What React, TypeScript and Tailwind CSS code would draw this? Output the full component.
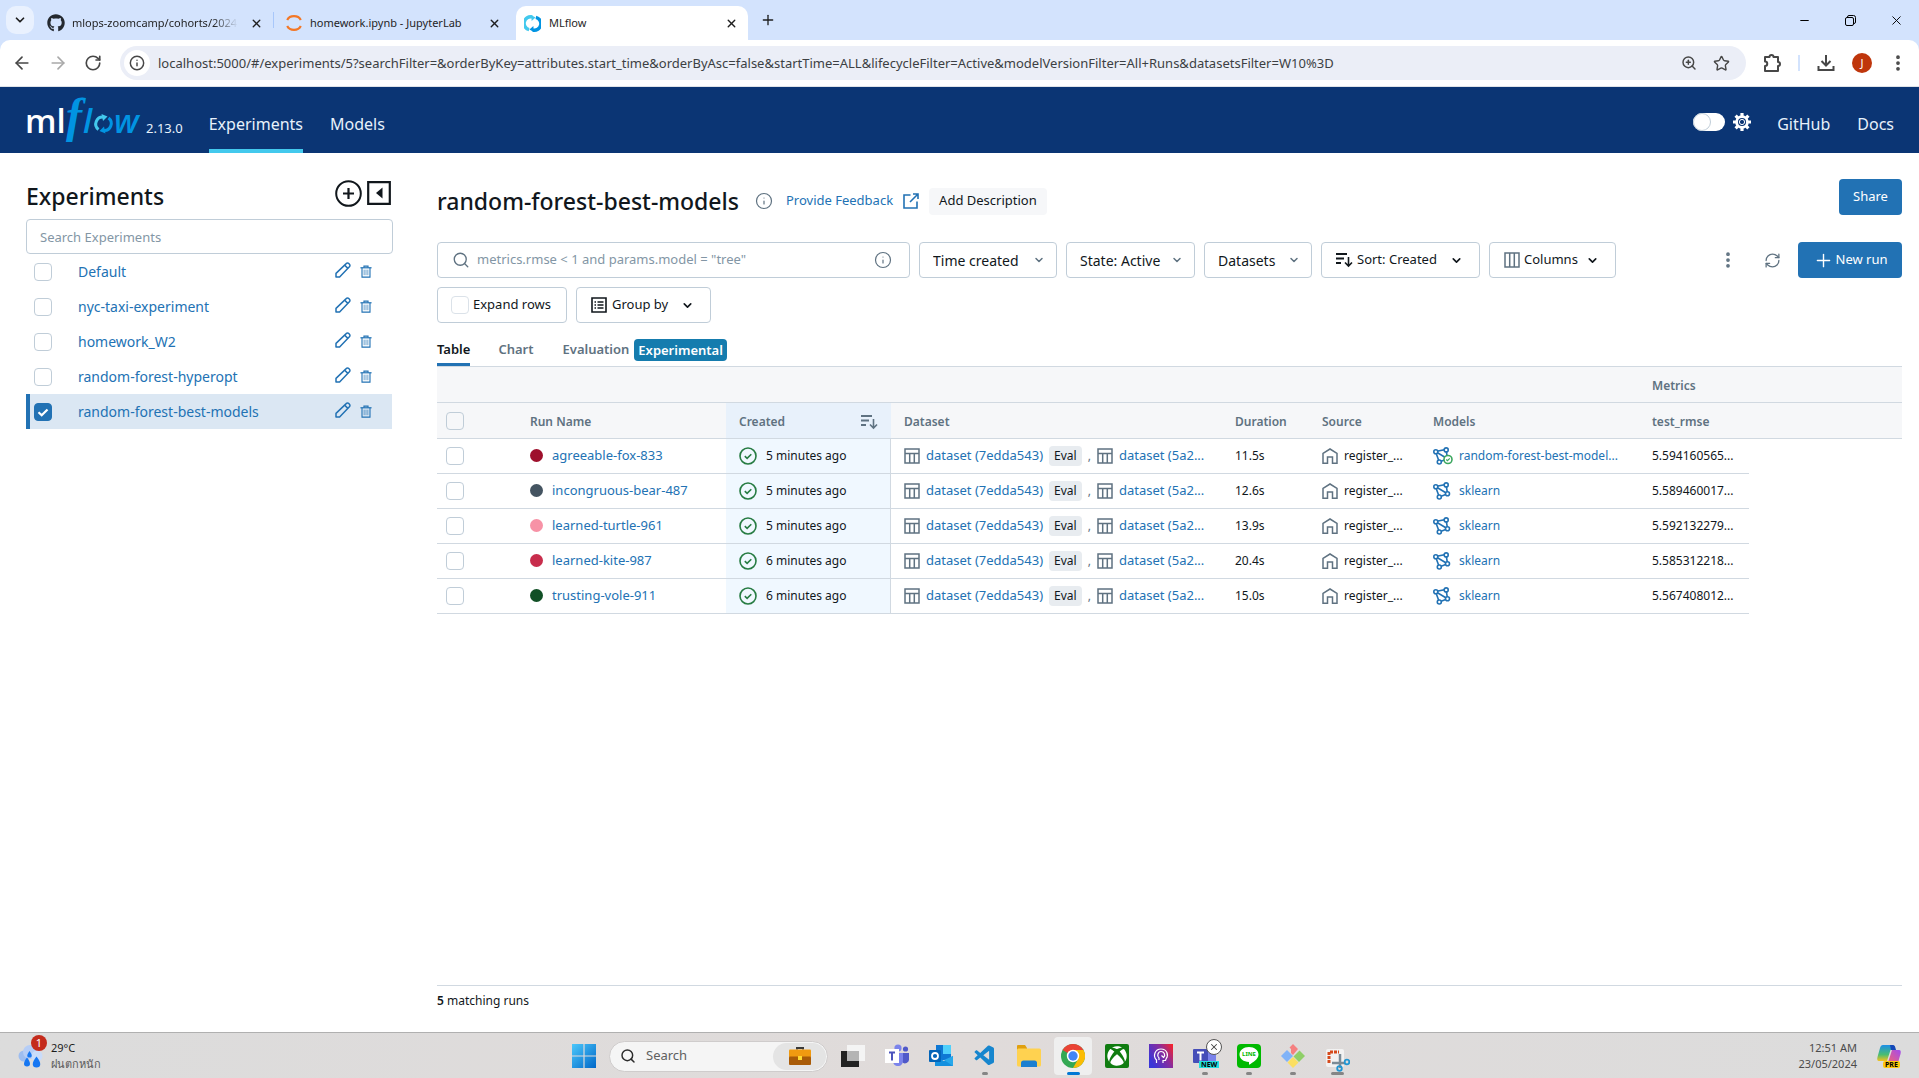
import React from "react";
import {
  ArrowLeft,
  ArrowRight,
  RotateCw,
  ChevronDown,
  Plus,
  X,
  Minus,
  Star,
  Info,
  Search,
  RefreshCw,
  EllipsisVertical,
  ZoomIn,
} from "lucide-react";
import { FaGithub, FaXbox } from "react-icons/fa";
import { VscVscode } from "react-icons/vsc";

const link = "text-[#2272b4]";

/* ---------- icons ---------- */

function MlflowMark({ size }: { size: number }) {
  return (
    <svg width={size} height={size} viewBox="0 0 20 20" fill="none" aria-hidden="true">
      <path d="M6 17.2A7.6 7.6 0 0 1 9.6 2.3" stroke="#43c9ed" strokeWidth="4" />
      <path d="M8.4 0l5.2 3-4.6 4z" fill="#43c9ed" />
      <path d="M14 2.8a7.6 7.6 0 0 1-3.6 14.9" stroke="#0194e2" strokeWidth="4" />
      <path d="M11.6 20l-5.2-3 4.6-4z" fill="#0194e2" />
    </svg>
  );
}

function JupyterIcon() {
  return (
    <svg width="18" height="18" viewBox="0 0 18 18" fill="none" stroke="#f37726" strokeWidth="2.2" aria-hidden="true">
      <path d="M2.2 6C3.5 3.4 6 2.2 9 2.2S14.5 3.4 15.8 6" />
      <path d="M2.2 12c1.3 2.6 3.8 3.8 6.8 3.8s5.5-1.2 6.8-3.8" />
    </svg>
  );
}

function PuzzleIcon() {
  return (
    <svg width="20" height="20" viewBox="0 0 20 20" fill="none" stroke="#474747" strokeWidth="2" strokeLinejoin="round" aria-hidden="true">
      <path d="M3 4h4.5a2 2 0 0 1 4 0H16v5a2 2 0 0 1 0 4v5H3v-5a2.2 2.2 0 0 0 0-4.5z" />
    </svg>
  );
}

function DownloadIcon() {
  return (
    <svg width="20" height="20" viewBox="0 0 20 20" fill="none" stroke="#474747" strokeWidth="2" aria-hidden="true">
      <path d="M10 2v10M5.5 8l4.5 4.5L14.5 8M2.5 13v4h15v-4" />
    </svg>
  );
}

function GearIcon() {
  return (
    <svg width="18" height="18" viewBox="0 0 18 18" aria-hidden="true">
      <circle cx="9" cy="9" r="5" fill="none" stroke="#fff" strokeWidth="3.6" />
      <path
        d="M9 0v3M9 15v3M0 9h3M15 9h3M2.6 2.6l2.2 2.2M13.2 13.2l2.2 2.2M2.6 15.4l2.2-2.2M13.2 4.8l2.2-2.2"
        stroke="#fff"
        strokeWidth="3.2"
      />
      <circle cx="9" cy="9" r="4" fill="#0b3574" />
      <circle cx="9" cy="9" r="2.6" fill="none" stroke="#fff" strokeWidth="1" />
    </svg>
  );
}

function ExternalIcon() {
  return (
    <svg width="16" height="16" viewBox="0 0 16 16" fill="none" stroke="#2272b4" strokeWidth="1.6" aria-hidden="true">
      <path d="M7.5 2H1v13h13V8.5" />
      <path d="M10 1h5v5M15 1L7 9" />
    </svg>
  );
}

function PencilIcon() {
  return (
    <svg width="16" height="16" viewBox="0 0 16 16" fill="none" stroke="#2272b4" strokeWidth="1.5" strokeLinejoin="round" aria-hidden="true">
      <path d="M1 15v-3.6L11.2 1.6a1.8 1.8 0 0 1 2.6 0l.6.6a1.8 1.8 0 0 1 0 2.6L4.6 15z" />
      <path d="M9.7 3.2l3.2 3.2" />
    </svg>
  );
}

function TrashIcon() {
  return (
    <svg width="12" height="13" viewBox="0 0 12 14" fill="none" stroke="#2272b4" aria-hidden="true">
      <path d="M0 3h12" strokeWidth="1.3" />
      <path d="M3.8 3V1.2h4.4V3M1.7 3v10h8.6V3" strokeWidth="1.2" />
      <path d="M4 5v6M6 5v6M8 5v6" strokeWidth="0.9" opacity="0.8" />
    </svg>
  );
}

function SortDownIcon({ color }: { color: string }) {
  return (
    <svg width="17" height="16" viewBox="0 0 17 16" fill="none" stroke={color} strokeWidth="1.8" aria-hidden="true">
      <path d="M0 2h11M0 6.5h8M0 11h5" />
      <path d="M12.5 5v9M9 10.5l3.5 3.5 3.5-3.5" strokeWidth="1.6" />
    </svg>
  );
}

function ColumnsIcon() {
  return (
    <svg width="16" height="16" viewBox="0 0 16 16" fill="none" stroke="#5f7281" strokeWidth="1.5" aria-hidden="true">
      <path d="M1 1h14v14H1zM5.7 1v14M10.3 1v14" />
    </svg>
  );
}

function ListBoxIcon() {
  return (
    <svg width="16" height="16" viewBox="0 0 16 16" fill="none" stroke="#11171c" strokeWidth="1.6" aria-hidden="true">
      <path d="M1 1h14v14H1z" />
      <path d="M3.5 5h1.5M3.5 8h1.5M3.5 11h1.5M6.5 5h6M6.5 8h6M6.5 11h6" strokeWidth="1.4" />
    </svg>
  );
}

function TableIcon() {
  return (
    <svg className="shrink-0" width="16" height="16" viewBox="0 0 16 16" fill="none" stroke="#5f7281" strokeWidth="1.5" aria-hidden="true">
      <path d="M1 1h14v14H1zM1 5.5h14M5.7 5.5V15M10.3 5.5V15" />
    </svg>
  );
}

function HomeIcon() {
  return (
    <svg className="shrink-0" width="16" height="16" viewBox="0 0 16 16" fill="none" stroke="#5f7281" strokeWidth="1.5" aria-hidden="true">
      <path d="M1 15.2V5.4L8 1l7 4.4v9.8h-4.500V9h-5v6.2z" />
    </svg>
  );
}

function CheckCircle() {
  return (
    <svg className="shrink-0" width="18" height="18" viewBox="0 0 18 18" fill="none" stroke="#277c43" strokeWidth="1.6" aria-hidden="true">
      <circle cx="9" cy="9" r="8" />
      <path d="M5.8 9.2l2.3 2.2 4.2-4.2" />
    </svg>
  );
}

function ModelIcon({ registered }: { registered?: boolean }) {
  return (
    <svg className="shrink-0" width="20" height="18" viewBox="0 0 20 18" fill="none" stroke="#2272b4" strokeWidth="1.6" aria-hidden="true">
      <path d="M2.5 4.5L13 2.5l1.6 9.3L2.5 4.5 6.3 15l8.3-3.2" />
      <circle cx="2.8" cy="4.7" r="2" fill="#fff" />
      <circle cx="13.2" cy="2.9" r="2" fill="#fff" />
      <circle cx="14.5" cy="11.8" r="2" fill="#fff" />
      <circle cx="6.3" cy="15" r="2" fill="#fff" />
      {registered && (
        <g stroke="#3ba65e">
          <circle cx="15" cy="12.5" r="4" fill="#fff" />
          <path d="M13.2 12.5l1.3 1.2 2.3-2.3" strokeWidth="1.2" />
        </g>
      )}
    </svg>
  );
}

function PlusCircle() {
  return (
    <svg width="27" height="27" viewBox="0 0 27 27" fill="none" stroke="#11171c" strokeWidth="2" aria-hidden="true">
      <circle cx="13.5" cy="13.5" r="12.3" />
      <path d="M13.5 8v11M8 13.5h11" strokeWidth="2.2" />
    </svg>
  );
}

function CollapseIcon() {
  return (
    <svg width="24" height="24" viewBox="0 0 24 24" fill="none" stroke="#11171c" strokeWidth="2.2" aria-hidden="true">
      <path d="M1.2 1.2h21.6v21.6H1.2z" />
      <path d="M15.5 6.5v11L9 12z" fill="#11171c" stroke="none" />
    </svg>
  );
}

/* ---------- small controls ---------- */

function Check({ label, checked, soft }: { label: string; checked?: boolean; soft?: boolean }) {
  return (
    <span className="relative inline-flex h-[18px] w-[18px] shrink-0">
      <input
        type="checkbox"
        aria-label={label}
        defaultChecked={checked}
        className={
          soft
            ? "peer h-[18px] w-[18px] appearance-none rounded border border-[#dbe2e9] bg-white checked:border-[#2272b4] checked:bg-[#2272b4]"
            : "peer h-[18px] w-[18px] appearance-none rounded border border-[#c0cdd8] bg-transparent checked:border-[#2272b4] checked:bg-[#2272b4]"
        }
      />
      <svg
        className="pointer-events-none absolute inset-0 hidden peer-checked:block"
        width="18"
        height="18"
        viewBox="0 0 18 18"
        fill="none"
        stroke="#fff"
        strokeWidth="2.2"
        aria-hidden="true"
      >
        <path d="M4.5 9.2l3.2 3L13.5 6.5" />
      </svg>
    </span>
  );
}

function FilterSelect({ label, width }: { label: string; width: string }) {
  return (
    <span className={"relative flex h-9 items-center " + width}>
      <select
        aria-label={label}
        className="h-9 w-full appearance-none rounded border border-[#c0cdd8] bg-white pl-[13px] pr-7 pt-0.5 text-sm text-[#11171c]"
      >
        <option>{label}</option>
      </select>
      <ChevronDown className="pointer-events-none absolute right-3" size={12} strokeWidth={3} color="#5f7281" />
    </span>
  );
}

/* ---------- browser ---------- */

function BrowserTab({ icon, title, fade }: { icon: React.ReactNode; title: string; fade?: boolean }) {
  return (
    <div className="flex h-[34px] w-[238px] items-center pl-3 pr-2.5">
      {icon}
      <span
        className={
          fade
            ? "ml-[7px] w-[166px] whitespace-nowrap [mask-image:linear-gradient(to_right,#000_85%,transparent)]"
            : "ml-[7px] w-[166px] whitespace-nowrap"
        }
      >
        {title}
      </span>
      <button aria-label={"Close " + title} className="ml-auto">
        <X size={13} strokeWidth={2.5} />
      </button>
    </div>
  );
}

function Browser() {
  return (
    <header className="bg-[#d3e3fd] text-[#1f1f1f]">
      <div className="flex h-10 items-end pl-1.5 text-[11px]">
        <button aria-label="Search tabs" className="mb-1.5 flex h-7 w-7 items-center justify-center rounded-[10px] bg-[#e9f1fe]">
          <ChevronDown size={14} strokeWidth={3} />
        </button>
        <div className="ml-px">
          <BrowserTab icon={<FaGithub size={18} color="#24292f" />} title="mlops-zoomcamp/cohorts/2024" fade />
        </div>
        <span className="mb-3 h-4 w-px bg-[#a8c7fa]" />
        <div className="-ml-px">
          <BrowserTab icon={<JupyterIcon />} title="homework.ipynb - JupyterLab" />
        </div>
        <div className="ml-[5px] flex h-[34px] w-[232px] items-center rounded-t-[10px] bg-white pl-2 pr-2.5">
          <MlflowMark size={17} />
          <span className="ml-2">MLflow</span>
          <button aria-label="Close MLflow" className="ml-auto">
            <X size={13} strokeWidth={2.5} />
          </button>
        </div>
        <button aria-label="New tab" className="mb-3 ml-3">
          <Plus size={16} />
        </button>
        <div className="ml-auto flex h-10 items-center text-black">
          <button aria-label="Minimize" className="flex w-[46px] justify-center">
            <Minus size={13} strokeWidth={2} />
          </button>
          <button aria-label="Restore" className="flex w-[46px] justify-center">
            <svg width="11" height="11" viewBox="0 0 11 11" fill="none" stroke="#000" aria-hidden="true">
              <rect x="0.5" y="2.5" width="8" height="8" rx="1.5" />
              <path d="M2.5 2.5V2A1.5 1.5 0 0 1 4 .5h4.500a2 2 0 0 1 2 2V7A1.5 1.5 0 0 1 9 8.5h-.5" />
            </svg>
          </button>
          <button aria-label="Close window" className="flex w-[46px] justify-center">
            <X size={15} strokeWidth={1.5} />
          </button>
        </div>
      </div>
      <div className="flex h-[47px] items-center rounded-t-[10px] border-b border-[#dfe3e8] bg-white pl-3 pr-[11px] text-[#474747]">
        <button aria-label="Back" className="mr-4">
          <ArrowLeft size={20} />
        </button>
        <button aria-label="Forward" className="mr-4 text-[#a9a9a9]">
          <ArrowRight size={20} />
        </button>
        <button aria-label="Reload">
          <RotateCw size={18} strokeWidth={2.2} />
        </button>
        <div className="ml-[18px] flex h-[34px] flex-1 items-center rounded-full bg-[#ebeef7] pl-1 pr-4">
          <button aria-label="Site information" className="flex h-[26px] w-[26px] shrink-0 items-center justify-center rounded-full bg-white">
            <Info size={16} strokeWidth={2.2} />
          </button>
          <input
            aria-label="Address"
            className="ml-2 min-w-0 flex-1 bg-transparent pt-0.5 text-[13px] text-[#3c3f43]"
            defaultValue="localhost:5000/#/experiments/5?searchFilter=&orderByKey=attributes.start_time&orderByAsc=false&startTime=ALL&lifecycleFilter=Active&modelVersionFilter=All+Runs&datasetsFilter=W10%3D"
          />
          <button aria-label="Zoom" className="mr-4">
            <ZoomIn size={16} strokeWidth={2.2} />
          </button>
          <button aria-label="Bookmark">
            <Star size={17} strokeWidth={2} />
          </button>
        </div>
        <button aria-label="Extensions" className="ml-4">
          <PuzzleIcon />
        </button>
        <span className="ml-4 h-4 w-0.5 bg-[#d3e3fd]" />
        <button aria-label="Downloads" className="ml-4">
          <DownloadIcon />
        </button>
        <button aria-label="Profile" className="ml-4 h-5 w-5 rounded-full bg-[#bf360c] text-[11px] leading-5 text-white">
          J
        </button>
        <button aria-label="Menu" className="ml-4">
          <EllipsisVertical size={20} strokeWidth={2.5} />
        </button>
      </div>
    </header>
  );
}

/* ---------- MLflow ---------- */

function Logo() {
  return (
    <svg width="118" height="66" viewBox="0 0 118 66" role="img" aria-label="mlflow">
      <text x="0" y="46" fontFamily="Open Sans" fontSize="33" fontWeight="600" fill="#fff">ml</text>
      <text x="41" y="45" fontFamily="Liberation Serif" fontSize="48" fontStyle="italic" fontWeight="700" fill="#0194e2">f</text>
      <text x="58" y="46" fontFamily="Open Sans" fontSize="33" fontStyle="italic" fontWeight="600" fill="#0194e2">l</text>
      <text x="89" y="46" fontFamily="Open Sans" fontSize="33" fontStyle="italic" fontWeight="600" fill="#0194e2">w</text>
      <g transform="translate(69 27)" fill="none" strokeWidth="3">
        <path d="M4.5 15.5A7 7 0 0 1 9.5 3" stroke="#43c9ed" />
        <path d="M7.5 0l6 2.5L9 7z" fill="#43c9ed" />
        <path d="M14.5 4a7 7 0 0 1-5 12.5" stroke="#0194e2" />
        <path d="M11.5 19.500l-6-2.500L10 12.500z" fill="#0194e2" />
      </g>
    </svg>
  );
}

function AppHeader() {
  return (
    <nav className="flex h-[66px] items-center bg-[#0b3574] px-[25px] text-base text-[#e7f1fb]">
      <Logo />
      <span className="ml-[3px] mt-[18px] text-[13px]">2.13.0</span>
      <a href="#experiments" className="ml-[26px] flex h-full items-center border-b-4 border-[#43c9ed] pt-3">
        Experiments
      </a>
      <a href="#models" className="ml-[27px] flex h-full items-center pt-2">
        Models
      </a>
      <button role="switch" aria-checked="false" aria-label="Dark theme" className="ml-auto mt-1 flex h-[18px] w-8 items-center rounded-full bg-white">
        <span className="h-[18px] w-[18px] rounded-full border border-[#c0cdd8] bg-white" />
      </button>
      <span className="ml-2 mt-1">
        <GearIcon />
      </span>
      <a href="#github" className="ml-[26px] pt-2">
        GitHub
      </a>
      <a href="#docs" className="ml-[27px] pt-2">
        Docs
      </a>
    </nav>
  );
}

const experiments = ["Default", "nyc-taxi-experiment", "homework_W2", "random-forest-hyperopt", "random-forest-best-models"];

function Sidebar() {
  return (
    <aside className="ml-[26px] w-[367px] shrink-0 pt-[26px]">
      <div className="flex h-[34px] items-center">
        <h1 className="text-[23px] font-medium text-[#11171c]">Experiments</h1>
        <button aria-label="Create experiment" className="mb-1.5 ml-auto">
          <PlusCircle />
        </button>
        <button aria-label="Hide experiments" className="mb-1.5 ml-[5px] mr-0.5">
          <CollapseIcon />
        </button>
      </div>
      <input
        aria-label="Search Experiments"
        placeholder="Search Experiments"
        className="mt-1.5 h-[35px] w-full rounded border border-[#c0cdd8] px-[13px] text-[13px] placeholder:text-[#8396a5]"
      />
      <ul>
        {experiments.map((name) => {
          const active = name === "random-forest-best-models";
          return (
            <li
              key={name}
              className={
                active
                  ? "mr-px flex h-[35px] items-center border-l-4 border-[#2272b4] bg-[#dbe7f3] pl-1 pr-5"
                  : "mr-px flex h-[35px] items-center border-l-4 border-transparent pl-1 pr-5"
              }
            >
              <Check label={"Select " + name} checked={active} />
              <a href="#experiment" className={"ml-[26px] text-sm " + link}>
                {name}
              </a>
              <button aria-label={"Rename " + name} className="mb-1 ml-auto">
                <PencilIcon />
              </button>
              <button aria-label={"Delete " + name} className="ml-[9px]">
                <TrashIcon />
              </button>
            </li>
          );
        })}
      </ul>
    </aside>
  );
}

const outlineButton = "flex h-9 items-center rounded border border-[#c0cdd8] bg-white text-[13px] text-[#11171c]";

function Toolbar() {
  return (
    <div className="mt-[27px] flex flex-wrap items-center gap-y-[9px]">
      <label className="flex h-9 w-[473px] items-center rounded border border-[#c0cdd8] pl-3.5 pr-[17px] text-[#5f7281]">
        <Search size={18} strokeWidth={1.8} />
        <input
          aria-label="Search runs"
          placeholder={'metrics.rmse < 1 and params.model = "tree"'}
          className="ml-[7px] min-w-0 flex-1 text-[13px] outline-none placeholder:text-[#8396a5]"
        />
        <Info size={18} strokeWidth={1.6} />
      </label>
      <div className="ml-[9px] flex gap-[9px]">
        <FilterSelect label="Time created" width="w-[138px]" />
        <FilterSelect label="State: Active" width="w-[129px]" />
        <FilterSelect label="Datasets" width="w-[108px]" />
        <button aria-haspopup="menu" className={outlineButton + " w-[159px] pl-3.5"}>
          <SortDownIcon color="#11171c" />
          <span className="ml-1">Sort: Created</span>
          <ChevronDown className="ml-auto mr-4" size={13} strokeWidth={3} />
        </button>
        <button aria-haspopup="menu" className={outlineButton + " w-[127px] pl-3.5"}>
          <ColumnsIcon />
          <span className="ml-1">Columns</span>
          <ChevronDown className="ml-auto mr-4" size={13} strokeWidth={3} />
        </button>
      </div>
      <div className="ml-auto flex items-center">
        <button aria-label="More" className="text-[#5f7281]">
          <EllipsisVertical size={20} strokeWidth={2.5} />
        </button>
        <button aria-label="Refresh" className="ml-[26px] text-[#5f7281]">
          <RefreshCw size={17} strokeWidth={1.8} />
        </button>
        <button className="ml-[17px] flex h-9 w-[104px] items-center justify-center rounded bg-[#2272b4] text-[13px] text-white">
          <Plus size={21} strokeWidth={1.6} />
          <span className="ml-0.5">New run</span>
        </button>
      </div>
      <div className="flex w-full gap-[9px]">
        <label className={outlineButton + " w-[130px] pl-[13px]"}>
          <Check label="Expand rows" soft />
          <span className="ml-1">Expand rows</span>
        </label>
        <button aria-haspopup="menu" className={outlineButton + " w-[135px] pl-3.5"}>
          <ListBoxIcon />
          <span className="ml-[5px]">Group by</span>
          <ChevronDown className="ml-auto mr-4" size={13} strokeWidth={3} />
        </button>
      </div>
    </div>
  );
}

const runs = [
  { name: "agreeable-fox-833", dot: "bg-[#9e102c]", ago: "5 minutes ago", time: "11.5s", model: "random-forest-best-model...", rmse: "5.594160565..." },
  { name: "incongruous-bear-487", dot: "bg-[#445461]", ago: "5 minutes ago", time: "12.6s", model: "sklearn", rmse: "5.589460017..." },
  { name: "learned-turtle-961", dot: "bg-[#f792a6]", ago: "5 minutes ago", time: "13.9s", model: "sklearn", rmse: "5.592132279..." },
  { name: "learned-kite-987", dot: "bg-[#c82d4c]", ago: "6 minutes ago", time: "20.4s", model: "sklearn", rmse: "5.585312218..." },
  { name: "trusting-vole-911", dot: "bg-[#115026]", ago: "6 minutes ago", time: "15.0s", model: "sklearn", rmse: "5.567408012..." },
];

function RunsTable() {
  const line = "border-b border-[#d1d9e1]";
  const head = line + " px-[13px] pt-0.5 font-semibold";
  return (
    <table className="w-full table-fixed border-separate border-spacing-0 text-left text-xs text-[#11171c]">
      <colgroup>
        <col className="w-[80px]" />
        <col className="w-[209px]" />
        <col className="w-[165px]" />
        <col className="w-[331px]" />
        <col className="w-[87px]" />
        <col className="w-[111px]" />
        <col className="w-[219px]" />
        <col className="w-[110px]" />
        <col />
      </colgroup>
      <thead className="bg-[#f6f7f9] text-[#5f7281]">
        <tr className="h-9">
          <th colSpan={7} className={line} />
          <th colSpan={2} className={head}>Metrics</th>
        </tr>
        <tr className="h-9">
          <th className={line + " pl-[9px]"}>
            <span className="flex">
              <Check label="Select all runs" />
            </span>
          </th>
          <th className={head}>Run Name</th>
          <th className={head + " bg-[#e8f1fb]"}>
            <span className="flex items-center justify-between">
              Created
              <SortDownIcon color="#5f7281" />
            </span>
          </th>
          <th className={head}>Dataset</th>
          <th className={head}>Duration</th>
          <th className={head}>Source</th>
          <th className={head}>Models</th>
          <th className={head}>test_rmse</th>
          <th className={line} />
        </tr>
      </thead>
      <tbody>
        {runs.map((r, i) => (
          <tr key={r.name} className="h-[35px]">
            <td className={line + " pl-[9px]"}>
              <span className="flex">
                <Check label={"Select " + r.name} />
              </span>
            </td>
            <td className={line + " px-[13px]"}>
              <span className="flex items-center">
                <span className={"mr-[9px] h-[13px] w-[13px] rounded-full " + r.dot} />
                <a href="#run" className={"text-[13px] " + link}>{r.name}</a>
              </span>
            </td>
            <td className={line + " border-r bg-[#f0f8ff] px-[13px]"}>
              <span className="flex items-center gap-[9px]">
                <CheckCircle />
                {r.ago}
              </span>
            </td>
            <td className={line + " pl-[13px] pr-4"}>
              <span className="flex items-center whitespace-nowrap">
                <TableIcon />
                <a href="#dataset" className={"ml-1.5 text-[13px] " + link}>dataset (7edda543)</a>
                <span className="ml-1.5 rounded bg-[#e8ecf0] px-[5px] py-0.5">Eval</span>
                <span className="ml-1.5 text-[#5f7281]">,</span>
                <span className="ml-1.5">
                  <TableIcon />
                </span>
                <a href="#dataset" className={"ml-1.5 text-[13px] " + link}>dataset (5a2...</a>
              </span>
            </td>
            <td className={line + " px-[13px]"}>{r.time}</td>
            <td className={line + " px-[13px]"}>
              <span className="flex items-center gap-1.5">
                <HomeIcon />
                register_...
              </span>
            </td>
            <td className={line + " pl-[13px]"}>
              <span className="flex items-center gap-1.5 whitespace-nowrap">
                <ModelIcon registered={i === 0} />
                <a href="#model" className={link}>{r.model}</a>
              </span>
            </td>
            <td className={line + " whitespace-nowrap pl-[13px]"}>{r.rmse}</td>
            <td />
          </tr>
        ))}
      </tbody>
    </table>
  );
}

function Main() {
  return (
    <main className="ml-11 mr-[17px] flex min-w-0 flex-1 flex-col pt-[26px]">
      <div className="flex h-9 items-center">
        <div className="flex items-center pt-2">
          <h2 className="text-[23px] font-medium text-[#11171c]">random-forest-best-models</h2>
          <Info className="ml-4" size={18} strokeWidth={1.6} color="#5f7281" />
          <a href="#feedback" className={"ml-[13px] flex items-center text-[13px] " + link}>
            Provide Feedback
            <span className="ml-2.5">
              <ExternalIcon />
            </span>
          </a>
          <button className="ml-2.5 h-[27px] rounded bg-[#f6f7f9] px-2.5 text-[13px] text-[#11171c]">Add Description</button>
        </div>
        <button className="ml-auto h-9 w-[63px] rounded bg-[#2272b4] text-[13px] text-white">Share</button>
      </div>
      <Toolbar />
      <div role="tablist" className="mt-2 flex h-9 border-b border-[#d1d9e1] text-[13px] font-semibold text-[#5f7281]">
        <button role="tab" aria-selected="true" className="border-b-[3px] border-[#2272b4] pt-[5px] text-[#11171c]">Table</button>
        <button role="tab" aria-selected="false" className="ml-7 pt-0.5">Chart</button>
        <button role="tab" aria-selected="false" className="ml-[29px] flex items-center pt-0.5">
          Evaluation
          <span className="ml-[5px] h-[22px] rounded bg-[#157cae] px-1 leading-[22px] text-white">Experimental</span>
        </button>
      </div>
      <RunsTable />
      <div className="mb-[22px] mt-auto border-t border-[#d1d9e1] pt-1.5 text-xs leading-[18px]">
        <b className="font-semibold">5</b> matching runs
      </div>
    </main>
  );
}

/* ---------- taskbar ---------- */

function AppSlot({ label, children, mark, active }: { label: string; children: React.ReactNode; mark?: string; active?: boolean }) {
  return (
    <button aria-label={label} className="relative flex h-[46px] w-11 items-center justify-center">
      <span className={active ? "flex h-[38px] w-[38px] items-center justify-center rounded bg-[#efefef]" : "flex"}>{children}</span>
      {mark && <span className={"absolute bottom-1 h-[3px] rounded-full " + mark} />}
    </button>
  );
}

const dot = "w-1.5 bg-[#858585]";

function Taskbar() {
  return (
    <footer className="grid h-[46px] grid-cols-[1fr_auto_1fr] items-center border-t border-[#b0b0b0] bg-linear-to-r from-[#dcdcdc] via-[#e0dbda] to-[#dcdcdc] text-[11px]">
      <button className="flex items-center pl-[18px] text-left">
        <span className="relative">
          <svg width="25" height="26" viewBox="0 0 25 26" aria-hidden="true">
            <circle cx="6" cy="13" r="5.500" fill="#9dbdf0" />
            <circle cx="12" cy="9" r="7" fill="#b5cdf6" />
            <circle cx="19" cy="13" r="5.500" fill="#c9dcfa" />
            <path d="M11.500 8c3 4 3 6.500 0 6.500s-3-2.500 0-6.500zM9 14.500c4 5 4 9 0 9s-4-4 0-9zM18.500 13.500c5 6 5 11 0 11s-5-5 0-11z" fill="#1677f2" />
          </svg>
          <span className="absolute -right-1 -top-2 h-4 w-4 rounded-full bg-[#c42b1c] text-center leading-4 text-white">1</span>
        </span>
        <span className="ml-2 leading-4 text-[#1b1b1b]">
          29°C
          <br />
          <span className="text-[#5a5a5a]">ฝนตกหนัก</span>
        </span>
      </button>

      <div className="flex items-center pl-0.5">
        <AppSlot label="Start">
          <svg width="24" height="24" viewBox="0 0 24 24" aria-hidden="true">
            <defs>
              <linearGradient id="win" x1="0" y1="0" x2="1" y2="1">
                <stop offset="0" stopColor="#4cc8fb" />
                <stop offset="1" stopColor="#0067c8" />
              </linearGradient>
            </defs>
            <path d="M0 0h11.400v11.400H0zM12.600 0H24v11.400H12.600zM0 12.600h11.400V24H0zM12.600 12.600H24V24H12.600z" fill="url(#win)" />
          </svg>
        </AppSlot>
        <label className="mx-[3px] flex h-[31px] w-[219px] items-center rounded-full border border-[#cfcccc] bg-[#f5f5f5] pl-2.5 pr-px">
          <Search size={16} strokeWidth={2.2} color="#2b2b2b" />
          <input aria-label="Search" placeholder="Search" className="ml-2.5 w-[100px] text-[13px] placeholder:text-[#606060]" />
          <span className="ml-auto flex h-[27px] w-[53px] items-center justify-center rounded-full bg-[#e4e4e4]">
            <svg width="22" height="18" viewBox="0 0 22 18" aria-hidden="true">
              <path d="M8 2.5V1h6v1.5" fill="none" stroke="#3a3a3a" strokeWidth="2" />
              <rect y="2.5" width="22" height="8" rx="1" fill="#f09a10" />
              <rect y="9.5" width="22" height="8.5" rx="1" fill="#a85b08" />
              <rect x="9" y="9" width="4" height="4" fill="#ffd92e" />
            </svg>
          </span>
        </label>
        <AppSlot label="Task view">
          <svg width="24" height="22" viewBox="0 0 24 22" aria-hidden="true">
            <rect y="6" width="18" height="16" fill="#222" />
            <rect x="6" width="18" height="16" fill="#f4f4f4" />
            <rect x="6" y="6" width="12" height="10" fill="#b4b4b4" />
          </svg>
        </AppSlot>
        <AppSlot label="Teams">
          <svg width="24" height="24" viewBox="0 0 24 24" aria-hidden="true">
            <circle cx="13" cy="4" r="3.6" fill="#7b83eb" />
            <circle cx="20.5" cy="5" r="2.6" fill="#5059c9" />
            <path d="M17 9h7v6a4 4 0 0 1-7 3z" fill="#5059c9" />
            <path d="M8 9h10v7c0 4-2 6-5 6s-5-2-5-5z" fill="#7b83eb" />
            <rect y="5" width="14" height="14" fill="#fff" />
            <path d="M4 8.5h6M7 8.5v8" stroke="#4b53bc" strokeWidth="2" />
          </svg>
        </AppSlot>
        <AppSlot label="Outlook">
          <svg width="24" height="24" viewBox="0 0 24 24" aria-hidden="true">
            <rect x="7" y="1" width="15" height="15" fill="#0f78d4" />
            <rect x="14" y="1" width="8" height="9" fill="#50d0fb" />
            <path d="M6 12l9 5 9-5v10H6z" fill="#1490df" />
            <path d="M24 12v10l-9-6z" fill="#28a8ea" />
            <rect y="6" width="12" height="12" rx="1" fill="#0364b8" />
            <circle cx="6" cy="12" r="3" fill="none" stroke="#fff" strokeWidth="1.8" />
          </svg>
        </AppSlot>
        <AppSlot label="Visual Studio Code" mark={dot}>
          <VscVscode size={24} color="#1786ce" />
        </AppSlot>
        <AppSlot label="File Explorer">
          <svg width="24" height="22" viewBox="0 0 24 22" aria-hidden="true">
            <path d="M0 1a1 1 0 0 1 1-1h7l2 3v4H0z" fill="#e0a010" />
            <rect y="3.5" width="24" height="18" rx="1.5" fill="#ffd250" />
            <path d="M4 22v-4a2.5 2.5 0 0 1 2.5-2.5h11A2.5 2.5 0 0 1 20 18v4z" fill="#1b7fd0" />
          </svg>
        </AppSlot>
        <AppSlot label="Chrome" mark="w-[13px] bg-[#0078d4]" active>
          <svg width="24" height="24" viewBox="0 0 24 24" aria-hidden="true">
            <circle cx="12" cy="12" r="12" fill="#34a853" />
            <path d="M12 12L1.6 6A12 12 0 0 1 22.400 6z" fill="#ea4335" />
            <path d="M12 6h10.400A12 12 0 0 1 12 24l5.200-9z" fill="#fbbc04" />
            <circle cx="12" cy="12" r="6.2" fill="#fff" />
            <circle cx="12" cy="12" r="4.7" fill="#4285f4" />
          </svg>
        </AppSlot>
        <AppSlot label="Xbox">
          <span className="flex h-6 w-6 items-center justify-center rounded-xs bg-[#107c10]">
            <FaXbox size={20} color="#fff" />
          </span>
        </AppSlot>
        <AppSlot label="Mind">
          <svg width="24" height="24" viewBox="0 0 24 24" fill="none" stroke="#fff" aria-hidden="true">
            <defs>
              <linearGradient id="mind" x1="0" y1="0.600" x2="1" y2="0">
                <stop offset="0" stopColor="#3a35d8" />
                <stop offset="0.550" stopColor="#8a2c9c" />
                <stop offset="1" stopColor="#ff2222" />
              </linearGradient>
            </defs>
            <rect width="24" height="24" fill="url(#mind)" stroke="none" />
            <path d="M7.500 19v-3c-4-4-1.500-11 4.500-11s8 6 5 10l-.5 1.500h-2.500V19" strokeWidth="1.200" />
            <path d="M10 16v-2c-2.500-2-1-6.500 2-6.500s5 3.500 2.500 6l-2-2" strokeWidth="1.200" />
          </svg>
        </AppSlot>
        <AppSlot label="Teams new" mark={dot}>
          <span className="relative">
            <svg width="24" height="24" viewBox="0 0 24 24" aria-hidden="true">
              <path d="M9 5h14v12H9z" fill="#7b83eb" />
              <rect y="5" width="15" height="14" rx="1" fill="#464eb8" />
              <path d="M4 8.5h7M7.5 8.5v8" stroke="#fff" strokeWidth="2" />
            </svg>
            <span className="absolute left-1.5 top-[17px] h-[7px] bg-[#26dfe0] px-0.5 text-[7px] font-bold leading-[7px] text-black">NEW</span>
            <span className="absolute -right-[5px] -top-[5px] flex h-4 w-4 items-center justify-center rounded-full border border-[#555] bg-white">
              <X size={10} strokeWidth={2.5} color="#444" />
            </span>
          </span>
        </AppSlot>
        <AppSlot label="LINE" mark={dot}>
          <span className="relative flex h-6 w-6 items-center justify-center rounded bg-[#00b900]">
            <svg width="20" height="18" viewBox="0 0 20 18" aria-hidden="true">
              <path d="M10 0c5.500 0 9.500 3.400 9.500 7.500 0 4.500-5.500 8-9.500 10.300v-2.900C4.500 14.900.5 11.600.5 7.500S4.500 0 10 0z" fill="#fff" />
            </svg>
            <span className="absolute inset-x-0 top-[7px] text-center text-[6px] font-bold leading-[7px] text-[#00b900]">LINE</span>
          </span>
        </AppSlot>
        <AppSlot label="Git" mark={dot}>
          <svg width="24" height="24" viewBox="0 0 24 24" aria-hidden="true">
            <path d="M12 0l5 5-5 6-2-2V5L8.500 3.500z" fill="#f58080" />
            <path d="M6 6l6 6-6 6-6-6z" fill="#80b3f8" />
            <path d="M18.500 6.500L24 12l-6 6-5.500-5.500z" fill="#8fcf68" />
            <path d="M12 13l5.500 5.500L12 24l-5.500-5.500z" fill="#fbdf62" />
          </svg>
        </AppSlot>
        <AppSlot label="Snipping Tool" mark="w-[13px] bg-[#858585]">
          <svg className="mt-2" width="25" height="24" viewBox="0 0 25 24" aria-hidden="true">
            <rect x="1" y="1" width="18" height="18" rx="2" fill="#f2f2f2" />
            <path d="M4 15V4h10" fill="none" stroke="#d64a1c" strokeWidth="3" strokeDasharray="3 1" />
            <path d="M15 6v14M7 15h13" stroke="#7b8b96" strokeWidth="2.5" />
            <circle cx="22" cy="14" r="2.3" fill="none" stroke="#2196d3" strokeWidth="1.8" />
            <circle cx="14.5" cy="20.5" r="2.3" fill="none" stroke="#2196d3" strokeWidth="1.8" />
          </svg>
        </AppSlot>
      </div>

      <div className="flex items-center justify-end pr-[18px] text-[#4b4b4b]">
        <span className="text-right leading-4">
          12:51 AM
          <br />
          23/05/2024
        </span>
        <button aria-label="Copilot" className="relative ml-5">
          <svg width="24" height="24" viewBox="0 0 24 24" aria-hidden="true">
            <defs>
              <linearGradient id="copA" x1="0" y1="0" x2="0" y2="1">
                <stop offset="0" stopColor="#1c8fe8" />
                <stop offset="0.6" stopColor="#49bd72" />
                <stop offset="1" stopColor="#f6c21c" />
              </linearGradient>
              <linearGradient id="copB" x1="1" y1="0" x2="0" y2="1">
                <stop offset="0" stopColor="#a14bf0" />
                <stop offset="1" stopColor="#f7646c" />
              </linearGradient>
            </defs>
            <path d="M6 1h9c2 0 3 1.500 3.500 5h-5L10 17H2c-2 0-2-2-1.500-4L3 4c.6-2 1.500-3 3-3z" fill="url(#copA)" />
            <path d="M13 1h3c2 0 2.500 3 3 5h-5z" fill="#1448b8" />
            <path d="M15 6h7c2 0 2 2 1.500 4l-2 7c-.5 2-1.500 3-3 3h-8z" fill="url(#copB)" />
          </svg>
          <span className="absolute left-1.5 top-[17px] rounded-xs bg-[#ffc90e] px-0.5 text-[7px] font-bold leading-[7px] text-black">PRE</span>
        </button>
      </div>
    </footer>
  );
}

export default function App() {
  return (
    <div className="flex min-h-screen flex-col bg-white font-['Noto_Sans','Open_Sans',sans-serif] text-[#11171c]">
      <Browser />
      <AppHeader />
      <div className="flex flex-1">
        <Sidebar />
        <Main />
      </div>
      <Taskbar />
    </div>
  );
}
